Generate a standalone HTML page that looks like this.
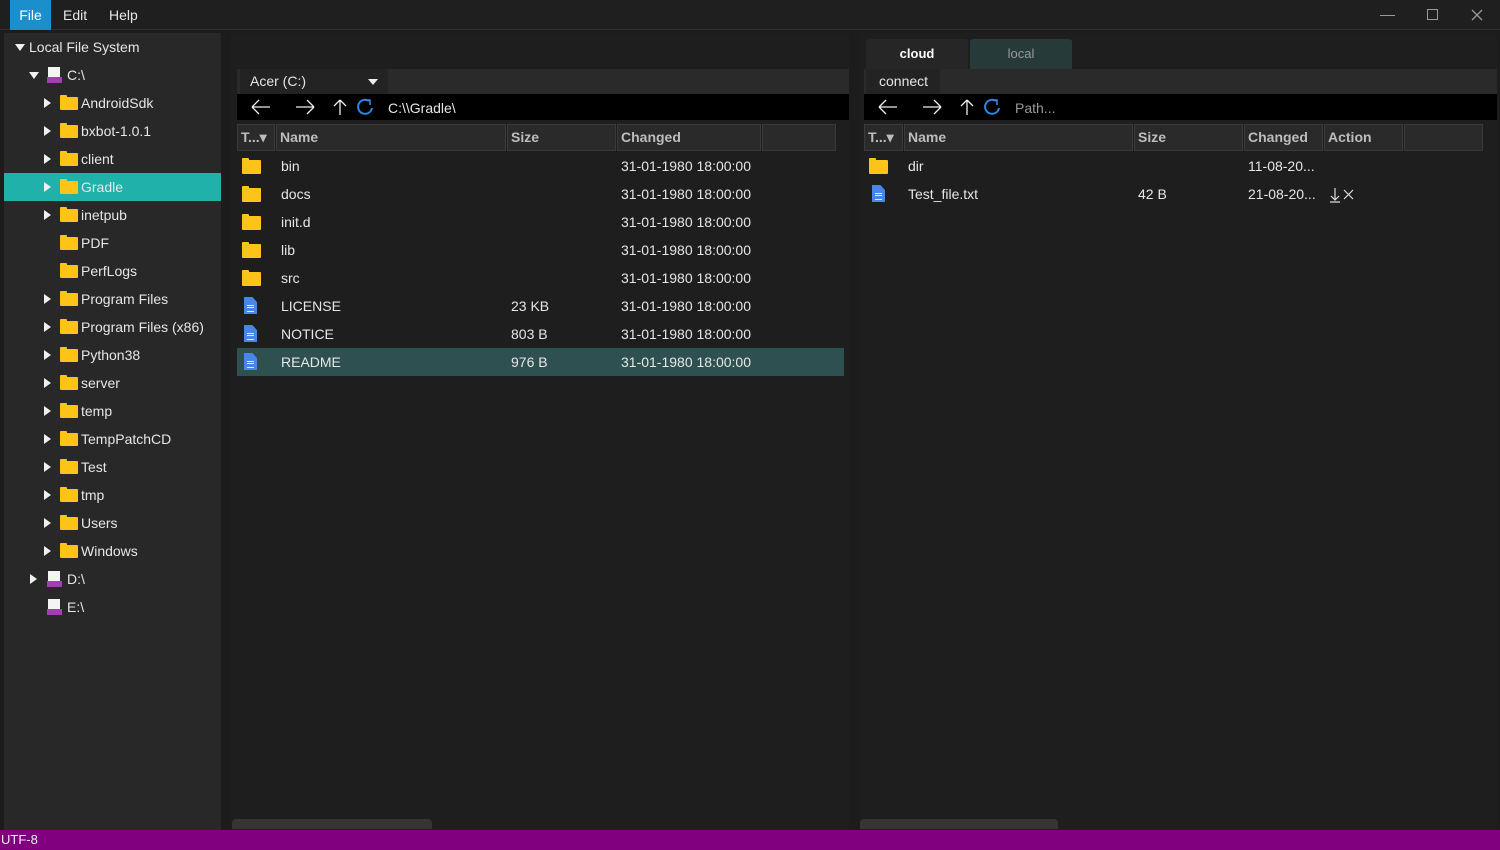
<!DOCTYPE html>
<html><head><meta charset="utf-8"><style>
*{margin:0;padding:0;box-sizing:border-box}
body{width:1500px;height:850px;background:#1c1c1c;font-family:"Liberation Sans",sans-serif;font-size:14px;color:#e6e6e6;position:relative;overflow:hidden}
.a{position:absolute;white-space:nowrap}
.menu{top:0;height:30px;line-height:30px;font-size:14px}
.tree{left:4px;top:33px;width:217px;height:797px;background:#282828}
.row{position:absolute;height:28px;line-height:28px;font-size:14px}
.tri{position:absolute;width:0;height:0;border-top:5px solid transparent;border-bottom:5px solid transparent;border-left:7px solid #f0f0f0;top:9px}
.trid{position:absolute;width:0;height:0;border-left:5px solid transparent;border-right:5px solid transparent;border-top:7px solid #f0f0f0;top:11px}
.fold{position:absolute;width:18px;height:13px;background:#fcc419;border-radius:1px;top:8px}
.fold:before{content:"";position:absolute;left:0;top:-2px;width:7px;height:3px;background:#fcc419;border-radius:1px 1px 0 0}
.drive{position:absolute;width:15px;height:16px;top:6px}
.drive:before{content:"";position:absolute;left:1px;top:0;width:12px;height:10px;background:#f4f4f4}
.drive:after{content:"";position:absolute;left:0;top:10px;width:15px;height:6px;background:#a040b0}
.pane{background:#1e1e1e}
.hdr{position:absolute;top:124px;height:27px;background:#2a2a2a;border:1px solid #3a3a3a;line-height:25px;font-weight:bold;color:#bdbdbd;padding-left:3px;font-size:14px}
.doc{position:absolute;width:13px;height:17px;background:#4a85e8;top:5px;clip-path:polygon(0 0,65% 0,100% 30%,100% 100%,0 100%)}
.doc:after{content:"";position:absolute;left:3px;top:8px;width:7px;height:5px;border-top:1px solid #dfe8fb;border-bottom:1px solid #dfe8fb}
.doc:before{content:"";position:absolute;left:3px;top:10px;width:7px;height:1px;background:#dfe8fb}
.tb{position:absolute;top:94px;height:26px;background:#000}
</style></head><body>
<!-- title -->
<div class="a" style="left:0;top:0;width:1500px;height:30px;background:#1f1f1f;border-bottom:1px solid #2e2e2e"></div>
<div class="a menu" style="left:10px;width:41px;background:#1a8fcc;text-align:center;color:#fff">File</div>
<div class="a menu" style="left:63px">Edit</div>
<div class="a menu" style="left:109px">Help</div>
<div class="a" style="left:1380px;top:15px;width:15px;height:1px;background:#999"></div>
<div class="a" style="left:1427px;top:9px;width:11px;height:11px;border:1px solid #999"></div>
<svg class="a" style="left:1471px;top:9px" width="12" height="12"><path d="M1 1L11 11M11 1L1 11" stroke="#999" stroke-width="1.3"/></svg>

<!-- tree -->
<div class="a tree">
 <div class="row" style="left:0;top:0;width:217px"><div class="trid" style="left:11px"></div><span style="position:absolute;left:25px">Local File System</span></div>
 <div class="row" style="left:0;top:28px;width:217px"><div class="trid" style="left:25px"></div><div class="drive" style="left:43px"></div><span style="position:absolute;left:63px">C:\</span></div>
 <div class="row" style="left:0;top:140px;width:217px;background:#20b2aa"></div>
</div>
<div class="a" style="left:4px;top:89px;width:217px;height:560px;font-size:14px">
 <div class="row" style="top:0"><div class="tri" style="left:40px"></div><div class="fold" style="left:56px"></div><span style="position:absolute;left:77px">AndroidSdk</span></div>
 <div class="row" style="top:28px"><div class="tri" style="left:40px"></div><div class="fold" style="left:56px"></div><span style="position:absolute;left:77px">bxbot-1.0.1</span></div>
 <div class="row" style="top:56px"><div class="tri" style="left:40px"></div><div class="fold" style="left:56px"></div><span style="position:absolute;left:77px">client</span></div>
 <div class="row" style="top:84px"><div class="tri" style="left:40px"></div><div class="fold" style="left:56px"></div><span style="position:absolute;left:77px">Gradle</span></div>
 <div class="row" style="top:112px"><div class="tri" style="left:40px"></div><div class="fold" style="left:56px"></div><span style="position:absolute;left:77px">inetpub</span></div>
 <div class="row" style="top:140px"><div class="fold" style="left:56px"></div><span style="position:absolute;left:77px">PDF</span></div>
 <div class="row" style="top:168px"><div class="fold" style="left:56px"></div><span style="position:absolute;left:77px">PerfLogs</span></div>
 <div class="row" style="top:196px"><div class="tri" style="left:40px"></div><div class="fold" style="left:56px"></div><span style="position:absolute;left:77px">Program Files</span></div>
 <div class="row" style="top:224px"><div class="tri" style="left:40px"></div><div class="fold" style="left:56px"></div><span style="position:absolute;left:77px">Program Files (x86)</span></div>
 <div class="row" style="top:252px"><div class="tri" style="left:40px"></div><div class="fold" style="left:56px"></div><span style="position:absolute;left:77px">Python38</span></div>
 <div class="row" style="top:280px"><div class="tri" style="left:40px"></div><div class="fold" style="left:56px"></div><span style="position:absolute;left:77px">server</span></div>
 <div class="row" style="top:308px"><div class="tri" style="left:40px"></div><div class="fold" style="left:56px"></div><span style="position:absolute;left:77px">temp</span></div>
 <div class="row" style="top:336px"><div class="tri" style="left:40px"></div><div class="fold" style="left:56px"></div><span style="position:absolute;left:77px">TempPatchCD</span></div>
 <div class="row" style="top:364px"><div class="tri" style="left:40px"></div><div class="fold" style="left:56px"></div><span style="position:absolute;left:77px">Test</span></div>
 <div class="row" style="top:392px"><div class="tri" style="left:40px"></div><div class="fold" style="left:56px"></div><span style="position:absolute;left:77px">tmp</span></div>
 <div class="row" style="top:420px"><div class="tri" style="left:40px"></div><div class="fold" style="left:56px"></div><span style="position:absolute;left:77px">Users</span></div>
 <div class="row" style="top:448px"><div class="tri" style="left:40px"></div><div class="fold" style="left:56px"></div><span style="position:absolute;left:77px">Windows</span></div>
 <div class="row" style="top:476px"><div class="tri" style="left:26px"></div><div class="drive" style="left:43px"></div><span style="position:absolute;left:63px">D:\</span></div>
 <div class="row" style="top:504px"><div class="drive" style="left:43px"></div><span style="position:absolute;left:63px">E:\</span></div>
</div>

<!-- left pane -->
<div class="a pane" style="left:231px;top:33px;width:618px;height:797px"></div>
<div class="a" style="left:237px;top:69px;width:612px;height:25px;background:#2a2a2a"></div>
<div class="a" style="left:240px;top:69px;width:148px;height:25px;background:#232323;line-height:25px;padding-left:10px">Acer (C:)<div style="position:absolute;left:128px;top:10px;border-left:5px solid transparent;border-right:5px solid transparent;border-top:6px solid #eee"></div></div>
<div class="tb" style="left:237px;width:612px"></div>
<svg class="a" style="left:250px;top:98px" width="130" height="20" fill="none" stroke="#eee" stroke-width="1.3"><path d="M2 9H20M2 9L9 2M2 9L9 16"/><path d="M46 9H64M64 9L57 2M64 9L57 16"/><path d="M90 17V2M90 2L84 8M90 2L96 8"/></svg>
<svg class="a" style="left:355px;top:97px" width="20" height="20" fill="none" stroke="#2f86e0" stroke-width="2"><path d="M14 4A7 7 0 1 0 17 11"/><path d="M10 3L15 3L15 8" stroke-width="1.6"/></svg>
<div class="a" style="left:388px;top:98px;line-height:20px">C:\\Gradle\</div>
<div class="hdr" style="left:237px;width:38px">T...▾</div>
<div class="hdr" style="left:276px;width:230px">Name</div>
<div class="hdr" style="left:507px;width:109px">Size</div>
<div class="hdr" style="left:617px;width:144px">Changed</div>
<div class="hdr" style="left:762px;width:74px"></div>
<div class="a" style="left:237px;top:348px;width:607px;height:28px;background:#2f5050"></div>
<div class="a" style="left:237px;top:152px;width:612px;height:230px">
 <div class="row" style="top:0;width:100%"><div class="fold" style="left:5px;width:19px;height:14px"></div><span style="position:absolute;left:44px">bin</span><span style="position:absolute;left:384px">31-01-1980 18:00:00</span></div>
 <div class="row" style="top:28px;width:100%"><div class="fold" style="left:5px;width:19px;height:14px"></div><span style="position:absolute;left:44px">docs</span><span style="position:absolute;left:384px">31-01-1980 18:00:00</span></div>
 <div class="row" style="top:56px;width:100%"><div class="fold" style="left:5px;width:19px;height:14px"></div><span style="position:absolute;left:44px">init.d</span><span style="position:absolute;left:384px">31-01-1980 18:00:00</span></div>
 <div class="row" style="top:84px;width:100%"><div class="fold" style="left:5px;width:19px;height:14px"></div><span style="position:absolute;left:44px">lib</span><span style="position:absolute;left:384px">31-01-1980 18:00:00</span></div>
 <div class="row" style="top:112px;width:100%"><div class="fold" style="left:5px;width:19px;height:14px"></div><span style="position:absolute;left:44px">src</span><span style="position:absolute;left:384px">31-01-1980 18:00:00</span></div>
 <div class="row" style="top:140px;width:100%"><div class="doc" style="left:7px"></div><span style="position:absolute;left:44px">LICENSE</span><span style="position:absolute;left:274px">23 KB</span><span style="position:absolute;left:384px">31-01-1980 18:00:00</span></div>
 <div class="row" style="top:168px;width:100%"><div class="doc" style="left:7px"></div><span style="position:absolute;left:44px">NOTICE</span><span style="position:absolute;left:274px">803 B</span><span style="position:absolute;left:384px">31-01-1980 18:00:00</span></div>
 <div class="row" style="top:196px;width:100%"><div class="doc" style="left:7px"></div><span style="position:absolute;left:44px">README</span><span style="position:absolute;left:274px">976 B</span><span style="position:absolute;left:384px">31-01-1980 18:00:00</span></div>
</div>
<div class="a" style="left:232px;top:819px;width:200px;height:10px;background:#353535;border-radius:4px 4px 0 0"></div>

<!-- right pane -->
<div class="a pane" style="left:860px;top:33px;width:637px;height:797px"></div>
<div class="a" style="left:866px;top:39px;width:102px;height:30px;background:#262626;border-radius:3px 3px 0 0;text-align:center;line-height:30px;font-size:13px;font-weight:bold;color:#fff">cloud</div>
<div class="a" style="left:970px;top:39px;width:102px;height:30px;background:#263a3a;border-radius:3px 3px 0 0;text-align:center;line-height:30px;font-size:13px;color:#999">local</div>
<div class="a" style="left:864px;top:69px;width:633px;height:25px;background:#2a2a2a"></div>
<div class="a" style="left:866px;top:69px;width:74px;height:25px;background:#232323;line-height:25px;padding-left:13px">connect</div>
<div class="tb" style="left:864px;width:633px"></div>
<svg class="a" style="left:877px;top:98px" width="130" height="20" fill="none" stroke="#eee" stroke-width="1.3"><path d="M2 9H20M2 9L9 2M2 9L9 16"/><path d="M46 9H64M64 9L57 2M64 9L57 16"/><path d="M90 17V2M90 2L84 8M90 2L96 8"/></svg>
<svg class="a" style="left:982px;top:97px" width="20" height="20" fill="none" stroke="#2f86e0" stroke-width="2"><path d="M14 4A7 7 0 1 0 17 11"/><path d="M10 3L15 3L15 8" stroke-width="1.6"/></svg>
<div class="a" style="left:1015px;top:98px;line-height:20px;color:#999">Path...</div>
<div class="hdr" style="left:864px;width:39px">T...▾</div>
<div class="hdr" style="left:904px;width:229px">Name</div>
<div class="hdr" style="left:1134px;width:109px">Size</div>
<div class="hdr" style="left:1244px;width:79px">Changed</div>
<div class="hdr" style="left:1324px;width:79px">Action</div>
<div class="hdr" style="left:1404px;width:79px"></div>
<div class="a" style="left:864px;top:152px;width:633px;height:60px">
 <div class="row" style="top:0;width:100%"><div class="fold" style="left:5px;width:19px;height:14px"></div><span style="position:absolute;left:44px">dir</span><span style="position:absolute;left:384px">11-08-20...</span></div>
 <div class="row" style="top:28px;width:100%"><div class="doc" style="left:8px"></div><span style="position:absolute;left:44px">Test_file.txt</span><span style="position:absolute;left:274px">42 B</span><span style="position:absolute;left:384px">21-08-20...</span>
 <svg style="position:absolute;left:465px;top:7px" width="30" height="16" fill="none" stroke="#ddd" stroke-width="1.2"><path d="M6 1V13M2 9L6 13L10 9M1 15H11"/><path d="M15 3L24 12M24 3L15 12"/></svg></div>
</div>
<div class="a" style="left:860px;top:819px;width:198px;height:10px;background:#353535;border-radius:4px 4px 0 0"></div>

<!-- status -->
<div class="a" style="left:0;top:830px;width:1500px;height:20px;background:#800080;line-height:20px;font-size:13px;padding-left:1px;color:#eee">UTF-8</div>
</body></html>
